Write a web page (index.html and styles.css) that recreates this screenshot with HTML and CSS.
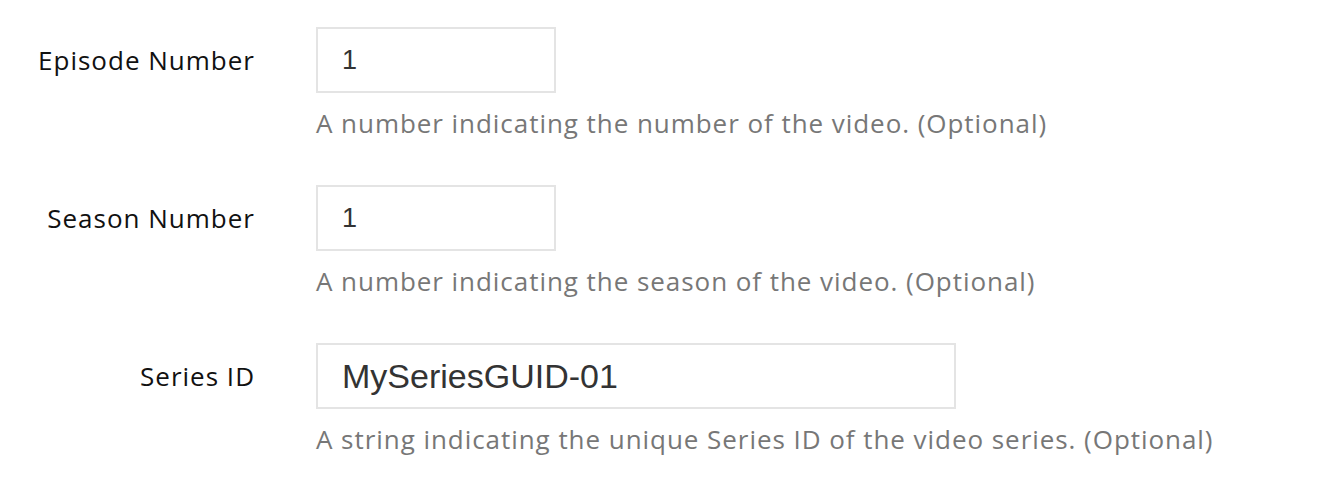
FILE: index.html
```html
<!DOCTYPE html>
<html>
<head>
<meta charset="utf-8">
<link rel="stylesheet" href="styles.css">
</head>
<body>
<form class="form">
  <div class="row">
    <label class="label">Episode Number</label>
    <div class="field">
      <input class="input input-short" type="text" value="1">
      <p class="help">A number indicating the number of the video. (Optional)</p>
    </div>
  </div>
  <div class="row">
    <label class="label">Season Number</label>
    <div class="field">
      <input class="input input-short" type="text" value="1">
      <p class="help">A number indicating the season of the video. (Optional)</p>
    </div>
  </div>
  <div class="row">
    <label class="label">Series ID</label>
    <div class="field">
      <input class="input input-long" type="text" value="MySeriesGUID-01">
      <p class="help">A string indicating the unique Series ID of the video series. (Optional)</p>
    </div>
  </div>
</form>
</body>
</html>
```
FILE: styles.css
```css
html, body {
  margin: 0;
  padding: 0;
  background: #ffffff;
}
.form {
  display: flex;
  flex-direction: column;
  padding-top: 27px;
  gap: 45px;
}
.row {
  display: flex;
  align-items: flex-start;
}
.label {
  width: 255px;
  text-align: right;
  font-family: "Open Sans", sans-serif;
  font-size: 26px;
  letter-spacing: 1px;
  color: #111;
  line-height: 66px;
  flex: none;
}
.field {
  margin-left: 61px;
  display: flex;
  flex-direction: column;
}
.input {
  box-sizing: border-box;
  height: 66px;
  border: 2px solid #e4e4e4;
  border-radius: 0;
  padding: 0 24px;
  font-family: "Liberation Sans", Arial, sans-serif;
  font-size: 27px;
  color: #333;
  background: #fff;
  outline: none;
}
.input-short {
  width: 240px;
}
.input-long {
  width: 640px;
  font-size: 34px;
}
.help {
  margin: 0;
  margin-top: 13px;
  font-family: "Open Sans", sans-serif;
  font-size: 26px;
  letter-spacing: 0.95px;
  line-height: 34px;
  color: #777;
}
```
